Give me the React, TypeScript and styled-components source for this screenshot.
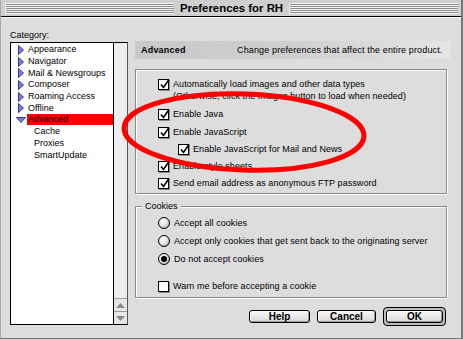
import styled, { createGlobalStyle } from 'styled-components';

const GlobalStyle = createGlobalStyle`
  html, body {
    margin: 0;
    padding: 0;
    background: #dddddd;
  }
  * {
    box-sizing: border-box;
  }
`;

const CATEGORIES = [
  { label: 'Appearance', kind: 'closed' },
  { label: 'Navigator', kind: 'closed' },
  { label: 'Mail & Newsgroups', kind: 'closed' },
  { label: 'Composer', kind: 'closed' },
  { label: 'Roaming Access', kind: 'closed' },
  { label: 'Offline', kind: 'closed' },
  { label: 'Advanced', kind: 'open' },
  { label: 'Cache', kind: 'child' },
  { label: 'Proxies', kind: 'child' },
  { label: 'SmartUpdate', kind: 'child' },
];

const Check = ({ checked = true }: { checked?: boolean }) => (
  <CheckBox>
    {checked && (
      <svg width="11" height="11" viewBox="0 0 11 11">
        <path d="M2 5.5 L4.5 8.5 L10 0.5" fill="none" stroke="#000" strokeWidth="1.6" />
      </svg>
    )}
  </CheckBox>
);

const Triangle = ({ open }: { open?: boolean }) =>
  open ? (
    <svg width="10" height="6" viewBox="0 0 10 6">
      <path d="M0.5 0.5 L9.5 0.5 L5 5.5 Z" fill="#7b7bdc" stroke="#3a3a8c" strokeWidth="1" />
    </svg>
  ) : (
    <svg width="6" height="10" viewBox="0 0 6 10">
      <path d="M0.5 0.5 L5.5 5 L0.5 9.5 Z" fill="#7b7bdc" stroke="#3a3a8c" strokeWidth="1" />
    </svg>
  );

const App = () => {
  return (
    <>
      <GlobalStyle />
      <Window>
        <TitleBar>
          <Stripes />
          <Title>Preferences for RH</Title>
          <Stripes />
        </TitleBar>
        <Body>
          <Sidebar>
            <Label>Category:</Label>
            <ListBox>
              <List>
                {CATEGORIES.map((c) => (
                  <ListRow key={c.label} $child={c.kind === 'child'}>
                    <Twisty>{c.kind !== 'child' && <Triangle open={c.kind === 'open'} />}</Twisty>
                    <ItemText $selected={c.label === 'Advanced'}>{c.label}</ItemText>
                  </ListRow>
                ))}
              </List>
              <ScrollBar>
                <ScrollTrack />
                <ScrollArrow>
                  <svg width="9" height="5" viewBox="0 0 9 5">
                    <path d="M0 5 L4.5 0 L9 5 Z" fill="#888" />
                  </svg>
                </ScrollArrow>
                <ScrollArrow>
                  <svg width="9" height="5" viewBox="0 0 9 5">
                    <path d="M0 0 L4.5 5 L9 0 Z" fill="#888" />
                  </svg>
                </ScrollArrow>
              </ScrollBar>
            </ListBox>
          </Sidebar>
          <Main>
            <Header>
              <HeaderTitle>Advanced</HeaderTitle>
              <HeaderText>Change preferences that affect the entire product.</HeaderText>
            </Header>
            <Group>
              <OptionRow>
                <Check />
                <OptionText>Automatically load images and other data types</OptionText>
              </OptionRow>
              <NoteText>(Otherwise, click the Images button to load when needed)</NoteText>
              <OptionRow $gap={6}>
                <Check />
                <OptionText>Enable Java</OptionText>
              </OptionRow>
              <OptionRow $gap={6}>
                <Check />
                <OptionText>Enable JavaScript</OptionText>
              </OptionRow>
              <OptionRow $gap={5} $indent={20}>
                <Check />
                <OptionText>Enable JavaScript for Mail and News</OptionText>
              </OptionRow>
              <OptionRow $gap={5}>
                <Check />
                <OptionText>Enable style sheets</OptionText>
              </OptionRow>
              <OptionRow $gap={5}>
                <Check />
                <OptionText>Send email address as anonymous FTP password</OptionText>
              </OptionRow>
            </Group>
            <CookieGroup>
              <Legend>Cookies</Legend>
              <OptionRow $gap={0}>
                <Radio />
                <OptionText>Accept all cookies</OptionText>
              </OptionRow>
              <OptionRow $gap={6}>
                <Radio />
                <OptionText>Accept only cookies that get sent back to the originating server</OptionText>
              </OptionRow>
              <OptionRow $gap={6}>
                <Radio $on />
                <OptionText>Do not accept cookies</OptionText>
              </OptionRow>
              <OptionRow $gap={15}>
                <Check checked={false} />
                <OptionText>Warn me before accepting a cookie</OptionText>
              </OptionRow>
            </CookieGroup>
            <Buttons>
              <Button $w={61}>Help</Button>
              <Button $w={59}>Cancel</Button>
              <DefaultRing>
                <Button $w={57}>OK</Button>
              </DefaultRing>
            </Buttons>
          </Main>
        </Body>
        <Annotation width="463" height="339" viewBox="0 0 463 339">
          <ellipse
            cx="243"
            cy="132"
            rx="120"
            ry="38"
            transform="rotate(2 243 132)"
            fill="none"
            stroke="#ff0000"
            strokeWidth="5"
          />
        </Annotation>
      </Window>
    </>
  );
};

const Window = styled.div`
  position: relative;
  width: 463px;
  height: 339px;
  background: #dddddd;
  border-left: 1px solid #a8a8a8;
  border-right: 2px solid #777;
  border-bottom: 1px solid #777;
  font-family: 'Liberation Sans', Arial, sans-serif;
  color: #000;
  overflow: hidden;
`;

const TitleBar = styled.div`
  height: 17px;
  display: flex;
  align-items: center;
  gap: 6px;
  padding: 0 3px 0 4px;
  background: #cfcfcf;
  border-bottom: 1px solid #000;
`;

const Stripes = styled.div`
  flex: 1;
  height: 11px;
  background: repeating-linear-gradient(#f4f4f4 0 1px, #8e8e8e 1px 2px);
  border-left: 1px solid #eee;
`;

const Title = styled.div`
  font-weight: bold;
  font-size: 11.4px;
`;

const Body = styled.div`
  display: flex;
  gap: 7px;
  padding: 12px 12px 0 9px;
  border-top: 1px solid #fff;
`;

const Sidebar = styled.div`
  flex: none;
  display: flex;
  flex-direction: column;
  width: 118px;
`;

const Label = styled.div`
  font-size: 9px;
  height: 12px;
  line-height: 10px;
`;

const ListBox = styled.div`
  display: flex;
  height: 283px;
  border: 1px solid #000;
  border-right-color: #555;
  background: #fff;
`;

const List = styled.div`
  flex: 1;
  padding-top: 1px;
  border-right: 1px solid #000;
`;

const ListRow = styled.div<{ $child?: boolean }>`
  display: flex;
  align-items: center;
  height: 11.7px;
  padding-left: ${(p) => (p.$child ? '9px' : '3px')};
`;

const Twisty = styled.span`
  display: inline-flex;
  align-items: center;
  justify-content: center;
  width: 13px;
`;

const ItemText = styled.span<{ $selected?: boolean }>`
  flex: 1;
  font-size: 9px;
  line-height: 11px;
  padding-left: 1px;
  white-space: nowrap;
  background: ${(p) => (p.$selected ? '#ff0000' : 'transparent')};
`;

const ScrollBar = styled.div`
  width: 13px;
  display: flex;
  flex-direction: column;
  background: #eeeeee;
`;

const ScrollTrack = styled.div`
  flex: 1;
`;

const ScrollArrow = styled.div`
  height: 13px;
  display: flex;
  align-items: center;
  justify-content: center;
  border-top: 1px solid #999;
  background: #e6e6e6;
`;

const Main = styled.div`
  flex: 1;
  min-width: 0;
  display: flex;
  flex-direction: column;
  padding-top: 11px;
`;

const Header = styled.div`
  height: 18px;
  display: flex;
  align-items: center;
  padding-left: 6px;
  background: linear-gradient(90deg, #c9c9c9 0%, #cfcfcf 50%, #e6e6e6 100%);
  margin-right: -1px;
`;

const HeaderTitle = styled.span`
  width: 96px;
  font-size: 9px;
  font-weight: bold;
  letter-spacing: 0.2px;
`;

const HeaderText = styled.span`
  font-size: 9px;
  letter-spacing: 0.14px;
  white-space: nowrap;
`;

const Frame = styled.div`
  border: 1px solid #8a8a8a;
  box-shadow: inset 1px 1px 0 #fff, 1px 1px 0 #fff;
  margin-right: 2px;
`;

const Group = styled(Frame)`
  height: 125px;
  margin-top: 10px;
  padding: 8px 0 0 22px;
`;

const CookieGroup = styled(Frame)`
  position: relative;
  height: 92px;
  margin-top: 12px;
  padding: 10px 0 0 22px;
`;

const Legend = styled.span`
  position: absolute;
  top: -7px;
  left: 6px;
  padding: 0 3px;
  background: #dddddd;
  font-size: 9px;
  line-height: 12px;
`;

const OptionRow = styled.div<{ $gap?: number; $indent?: number }>`
  display: flex;
  align-items: center;
  gap: 4px;
  height: 12px;
  margin-top: ${(p) => p.$gap ?? 0}px;
  margin-left: ${(p) => p.$indent ?? 0}px;
`;

const OptionText = styled.span`
  font-size: 9px;
  letter-spacing: 0.06px;
  line-height: 12px;
  white-space: nowrap;
`;

const NoteText = styled(OptionText)`
  display: block;
  padding-left: 15px;
`;

const CheckBox = styled.span`
  width: 11px;
  height: 11px;
  flex: none;
  display: inline-flex;
  background: #fff;
  border: 1px solid #000;
  box-shadow: 1px 1px 0 #888;
  svg {
    margin: -1px 0 0 0;
    overflow: visible;
  }
`;

const Radio = styled.span<{ $on?: boolean }>`
  position: relative;
  width: 12px;
  height: 12px;
  flex: none;
  border-radius: 50%;
  border: 1px solid #000;
  background: radial-gradient(circle at 40% 35%, #ffffff 0%, #e4e4e4 45%, #9c9c9c 100%);
  &::after {
    content: '';
    display: ${(p) => (p.$on ? 'block' : 'none')};
    position: absolute;
    left: 2px;
    top: 2px;
    width: 6px;
    height: 6px;
    border-radius: 50%;
    background: #000;
  }
`;

const Buttons = styled.div`
  display: flex;
  justify-content: flex-end;
  align-items: center;
  gap: 7px;
  margin-top: 9px;
  padding-right: 3px;
`;

const Button = styled.button<{ $w: number }>`
  width: ${(p) => p.$w}px;
  height: 13px;
  padding: 0;
  border: 1px solid #000;
  border-radius: 3px;
  background: linear-gradient(#f8f8f8, #d8d8d8);
  box-shadow: inset -1px -1px 0 #999, inset 1px 1px 0 #fff;
  font-family: 'Liberation Sans', Arial, sans-serif;
  font-weight: bold;
  font-size: 10px;
  line-height: 11px;
  color: #000;
`;

const DefaultRing = styled.div`
  display: flex;
  padding: 2px;
  border: 1px solid #000;
  border-radius: 4px;
  background: #bdbdbd;
`;

const Annotation = styled.svg`
  position: absolute;
  left: 0;
  top: 0;
  pointer-events: none;
`;

export default App;
